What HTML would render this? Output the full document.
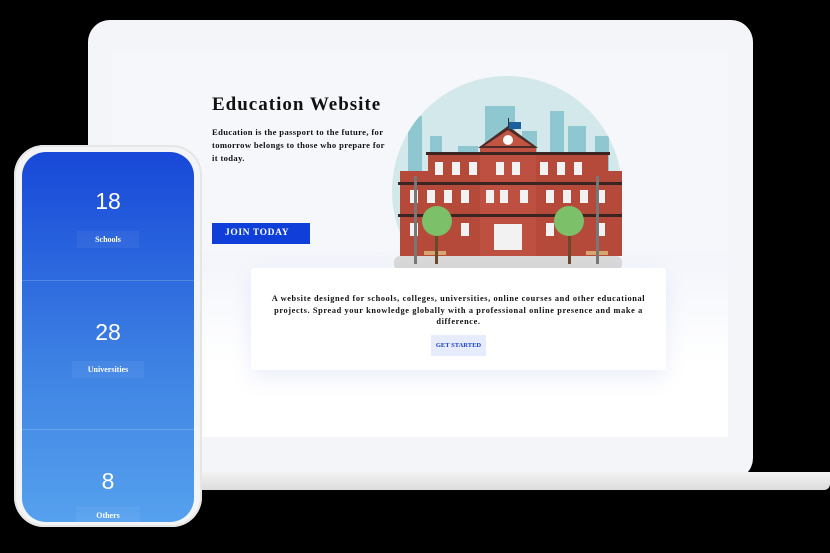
<!DOCTYPE html>
<html><head><style>
*{margin:0;padding:0;box-sizing:border-box}
body{width:830px;height:553px;background:#000;position:relative;overflow:hidden;font-family:"Liberation Serif",serif}
.lid{position:absolute;left:88px;top:20px;width:665px;height:460px;background:#f4f5f8;border-radius:22px}
.base{position:absolute;left:195px;top:472px;width:635px;height:18px;background:linear-gradient(#f3f3f3,#dcdcdc);border-radius:0 0 6px 6px}
.screen{position:absolute;left:112px;top:52px;width:616px;height:385px;background:#f6f7fb}
.screen .lower{position:absolute;left:0;top:200px;width:616px;height:185px;background:linear-gradient(#f3f5fb,#fff 60%)}
h1{position:absolute;left:212px;top:94px;font-size:19px;letter-spacing:1px;font-weight:bold;color:#111}
.p1{position:absolute;left:212px;top:126px;width:260px;font-size:8.6px;letter-spacing:0.35px;font-weight:bold;line-height:13px;color:#111;white-space:nowrap}
.join{position:absolute;left:212px;top:223px;width:98px;height:21px;background:#0f3fd8;color:#fff;font-weight:bold;font-size:9.5px;letter-spacing:0.6px;line-height:21px;padding-left:13px}
.card{position:absolute;left:251px;top:268px;width:415px;height:102px;background:#fff;border-radius:3px;box-shadow:0 8px 20px rgba(120,140,220,.15);text-align:center}
.card p{font-size:8.3px;letter-spacing:0.62px;font-weight:bold;line-height:11.5px;color:#111;padding:25px 10px 0;white-space:nowrap}
.gs{display:inline-block;margin-top:7px;background:#e6ecfb;color:#1e3ec6;font-size:6.5px;font-weight:bold;padding:7px 5px}
.phone{position:absolute;left:14px;top:145px;width:188px;height:382px;background:#f3f4f6;border-radius:30px;box-shadow:inset 0 0 0 2px #e6e6e6}
.pin{position:absolute;left:22px;top:152px;width:172px;height:370px;border-radius:24px;background:linear-gradient(#1748d8,#3f84e4 60%,#56a1ee);overflow:hidden;color:#fff;text-align:center}
.sec{position:absolute;left:0;width:172px;border-bottom:1px solid rgba(255,255,255,.18)}
.num{font-family:"Liberation Sans",sans-serif;font-size:23px}
.lab{font-size:8px;font-weight:bold;display:inline-block;background:rgba(255,255,255,.05);padding:4px 8px}
</style></head><body>
<div class="lid"></div>
<div class="base"></div>
<div class="screen"><div class="lower"></div></div>
<h1>Education Website</h1>
<div class="p1">Education is the passport to the future, for<br>tomorrow belongs to those who prepare for<br>it today.</div>
<div class="join">JOIN TODAY</div>
<svg style="position:absolute;left:390px;top:76px" width="236" height="196" viewBox="0 0 236 196">
<defs><clipPath id="c"><ellipse cx="117" cy="115" rx="115" ry="115"/></clipPath></defs>
<g clip-path="url(#c)"><rect x="0" y="0" width="236" height="196" fill="#d3e8ea"/>
<g fill="#8ec7d0"><rect x="18" y="40" width="14" height="120"/><rect x="40" y="60" width="12" height="100"/><rect x="95" y="30" width="30" height="130"/><rect x="132" y="55" width="15" height="100"/><rect x="160" y="35" width="14" height="120"/><rect x="178" y="50" width="18" height="110"/><rect x="205" y="60" width="14" height="100"/><rect x="68" y="70" width="20" height="90"/></g></g>
<rect x="4" y="180" width="228" height="14" rx="6" fill="#d9d9d9"/>
<rect x="10" y="95" width="222" height="85" fill="#b54a3b"/>
<rect x="38" y="78" width="180" height="20" fill="#b54a3b"/>
<rect x="90" y="70" width="56" height="110" fill="#bd5040"/>
<polygon points="88,72 118,50 148,72" fill="#4a2b27"/><polygon points="94,70 118,54 142,70" fill="#c25444"/>
<circle cx="118" cy="64" r="5" fill="#fff"/>
<rect x="118" y="42" width="1" height="12" fill="#333"/><rect x="119" y="46" width="12" height="7" fill="#1c5fa0"/>
<rect x="36" y="76" width="184" height="3" fill="#3b2522"/><rect x="8" y="106" width="224" height="3" fill="#3b2522"/><rect x="8" y="138" width="224" height="3" fill="#3b2522"/>
<g fill="#f2f2f2"><rect x="20" y="114" width="8" height="13"/><rect x="37" y="114" width="8" height="13"/><rect x="54" y="114" width="8" height="13"/><rect x="71" y="114" width="8" height="13"/><rect x="96" y="114" width="8" height="13"/><rect x="110" y="114" width="8" height="13"/><rect x="130" y="114" width="8" height="13"/><rect x="156" y="114" width="8" height="13"/><rect x="173" y="114" width="8" height="13"/><rect x="190" y="114" width="8" height="13"/><rect x="207" y="114" width="8" height="13"/>
<rect x="45" y="86" width="8" height="13"/><rect x="62" y="86" width="8" height="13"/><rect x="79" y="86" width="8" height="13"/><rect x="106" y="86" width="8" height="13"/><rect x="122" y="86" width="8" height="13"/><rect x="150" y="86" width="8" height="13"/><rect x="167" y="86" width="8" height="13"/><rect x="184" y="86" width="8" height="13"/>
<rect x="20" y="147" width="8" height="13"/><rect x="71" y="147" width="8" height="13"/><rect x="156" y="147" width="8" height="13"/><rect x="207" y="147" width="8" height="13"/><rect x="104" y="148" width="28" height="26"/></g>
<rect x="196" y="175" width="22" height="4" fill="#d7a670"/><rect x="34" y="175" width="22" height="4" fill="#d7a670"/>
<rect x="24" y="100" width="3" height="88" fill="#777"/><rect x="206" y="100" width="3" height="88" fill="#777"/>
<rect x="45" y="150" width="3" height="38" fill="#6b4a2a"/><rect x="178" y="150" width="3" height="38" fill="#6b4a2a"/>
<circle cx="47" cy="145" r="15" fill="#7cc06a"/><circle cx="179" cy="145" r="15" fill="#7cc06a"/>
</svg>
<div class="card"><p>A website designed for schools, colleges, universities, online courses and other educational<br>projects. Spread your knowledge globally with a professional online presence and make a<br>difference.</p><span class="gs">GET STARTED</span></div>
<div class="phone"></div>
<div class="pin">
<div class="sec" style="top:0;height:129px"><div class="num" style="margin-top:36px">18</div><div class="lab" style="margin-top:16px;padding:4px 18px">Schools</div></div>
<div class="sec" style="top:129px;height:149px"><div class="num" style="margin-top:38px">28</div><div class="lab" style="margin-top:15px;padding:4px 16px">Universities</div></div>
<div class="sec" style="top:278px;height:100px;border:0"><div class="num" style="margin-top:38px">8</div><div class="lab" style="margin-top:12px;padding:4px 20px">Others</div></div>
</div>
</body></html>
